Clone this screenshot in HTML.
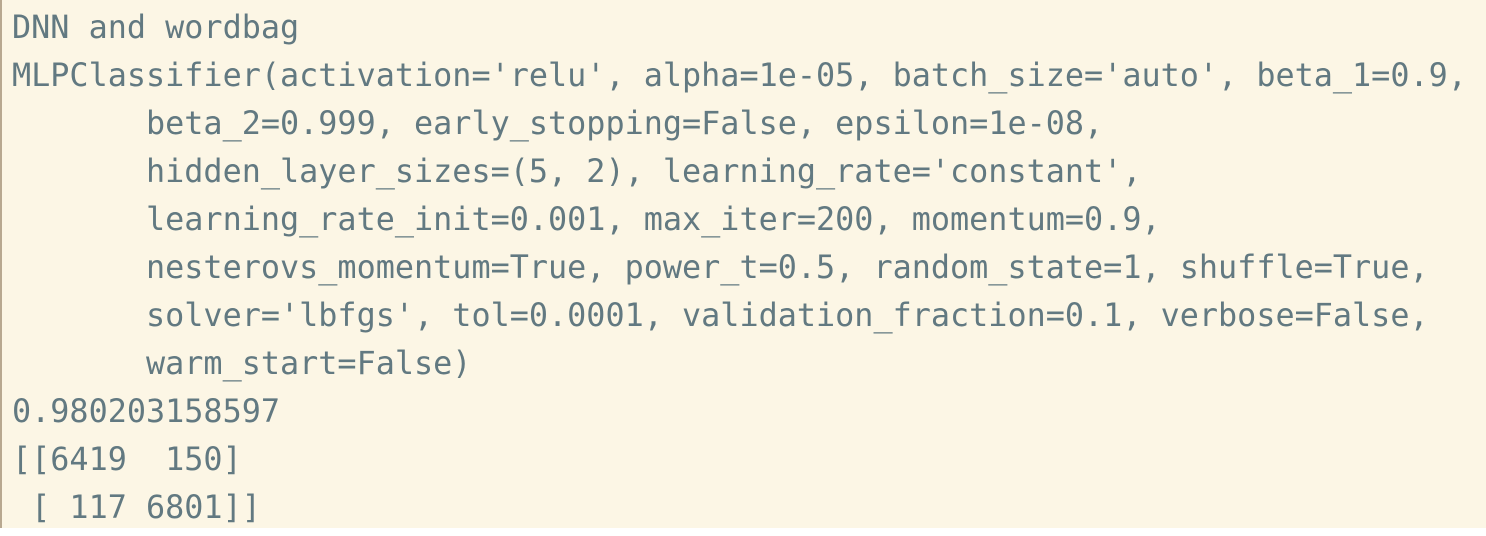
<!DOCTYPE html>
<html><head><style>
html,body{margin:0;padding:0;width:1486px;height:536px;background:#fff;overflow:hidden}
.box{position:absolute;left:0;top:0;width:1486px;height:528px;background:#fcf6e5;border-left:2px solid #b8a890;box-sizing:border-box}
pre{margin:0;position:absolute;left:12px;top:4px;font-family:"DejaVu Sans Mono","Liberation Mono",monospace;font-size:31.8px;line-height:48px;color:#627981;white-space:pre}
</style></head><body>
<div class="box"></div>
<pre>DNN and wordbag
MLPClassifier(activation='relu', alpha=1e-05, batch_size='auto', beta_1=0.9,
       beta_2=0.999, early_stopping=False, epsilon=1e-08,
       hidden_layer_sizes=(5, 2), learning_rate='constant',
       learning_rate_init=0.001, max_iter=200, momentum=0.9,
       nesterovs_momentum=True, power_t=0.5, random_state=1, shuffle=True,
       solver='lbfgs', tol=0.0001, validation_fraction=0.1, verbose=False,
       warm_start=False)
0.980203158597
[[6419  150]
 [ 117 6801]]</pre>
</body></html>
